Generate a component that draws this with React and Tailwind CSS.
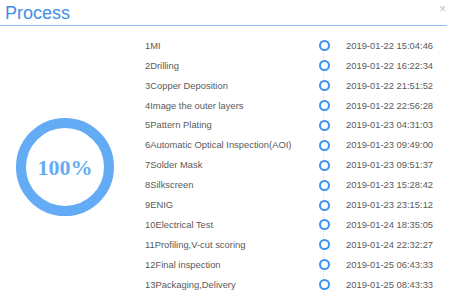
import React from "react";

const steps = [
  ["1MI", "2019-01-22 15:04:46"],
  ["2Drilling", "2019-01-22 16:22:34"],
  ["3Copper Deposition", "2019-01-22 21:51:52"],
  ["4Image the outer layers", "2019-01-22 22:56:28"],
  ["5Pattern Plating", "2019-01-23 04:31:03"],
  ["6Automatic Optical Inspection(AOI)", "2019-01-23 09:49:00"],
  ["7Solder Mask", "2019-01-23 09:51:37"],
  ["8Silkscreen", "2019-01-23 15:28:42"],
  ["9ENIG", "2019-01-23 23:15:12"],
  ["10Electrical Test", "2019-01-24 18:35:05"],
  ["11Profiling,V-cut scoring", "2019-01-24 22:32:27"],
  ["12Final inspection", "2019-01-25 06:43:33"],
  ["13Packaging,Delivery", "2019-01-25 08:43:33"],
];

export default function App() {
  return (
    <div className="w-[450px] h-[294px] bg-white overflow-hidden font-['Liberation_Sans',Arial,sans-serif]">
      {/* Header */}
      <div className="flex items-center justify-between h-[26px] mr-[3px] border-b border-[#8ec0f2]">
        <span className="pl-[5px] text-[18px] leading-none text-[#3d8fe6]">Process</span>
        <span className="text-[12px] leading-none text-[#c4c4c4] -mt-[8px] mr-[1px]">×</span>
      </div>

      <div className="flex">
        {/* Progress ring */}
        <div className="w-[130px] flex items-center justify-center">
          <div className="relative w-[98px] h-[98px] mt-[14px]">
            <svg width="98" height="98" viewBox="0 0 98 98">
              <circle cx="49" cy="49" r="44" fill="none" stroke="#63abf5" strokeWidth="10" />
            </svg>
            <div className="absolute inset-0 flex items-center justify-center font-['Liberation_Serif',serif] font-bold text-[22px] text-[#66acf3]">
              100%
            </div>
          </div>
        </div>

        {/* Step list */}
        <div className="relative pt-[10px] pl-[15px]">
          <div className="absolute left-[193px] top-[20px] bottom-[-10px] w-px bg-[#f0f0f0]" />
          {steps.map(([name, time]) => (
            <div key={name} className="relative flex items-center h-[19.9px] text-[9.4px] text-[#5a5a5a]">
              <span className="w-[173.5px]">{name}</span>
              <span className="w-[11px] h-[11px] rounded-full border-2 border-[#3f93ee] bg-white" />
              <span className="ml-[16.5px]">{time}</span>
            </div>
          ))}
        </div>
      </div>
    </div>
  );
}
